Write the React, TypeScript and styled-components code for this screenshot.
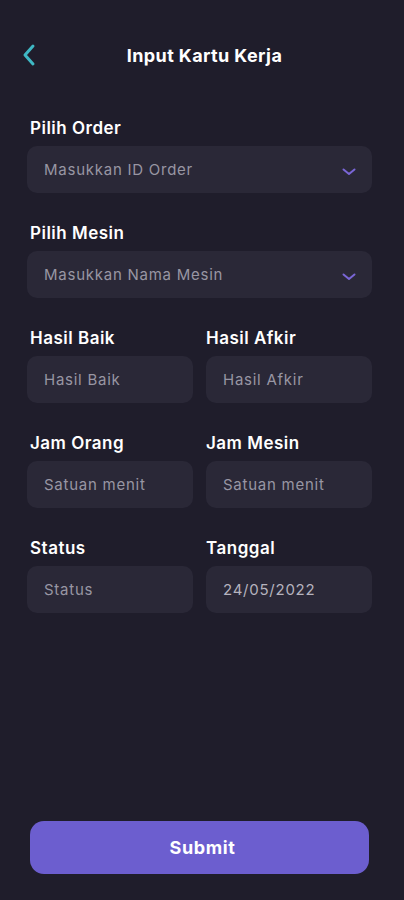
import styled, { createGlobalStyle } from 'styled-components';

const GlobalStyle = createGlobalStyle`
    * {
        box-sizing: border-box;
    }
    body {
        margin: 0;
        background-color: #1f1d2b;
        font-family: Inter, 'Noto Sans', sans-serif;
    }
`;

const ChevronLeft = () => (
    <svg width="16" height="24" viewBox="0 0 16 24" fill="none">
        <path d="M12 3L4 12L12 21" stroke="#3fb8c4" strokeWidth="3" strokeLinecap="round" strokeLinejoin="round" />
    </svg>
);

const ChevronDown = () => (
    <svg width="14" height="8" viewBox="0 0 14 8" fill="none">
        <path d="M1.5 1.5L7 6L12.5 1.5" stroke="#7a66d6" strokeWidth="2" strokeLinecap="round" strokeLinejoin="round" />
    </svg>
);

type FieldProps = {
    label: string;
    placeholder: string;
    select?: boolean;
    filled?: boolean;
    flush?: boolean;
};

const Field: React.FC<FieldProps> = ({ label, placeholder, select, filled, flush }) => (
    <StyledField>
        <StyledLabel flush={flush}>{label}</StyledLabel>
        <StyledInputBox>
            <StyledInputText filled={filled}>{placeholder}</StyledInputText>
            {select && (
                <StyledIconSlot>
                    <ChevronDown />
                </StyledIconSlot>
            )}
        </StyledInputBox>
    </StyledField>
);

const App = () => {
    return (
        <StyledScreen>
            <GlobalStyle />
            <StyledHeader>
                <StyledBackButton>
                    <ChevronLeft />
                </StyledBackButton>
                <StyledTitle>Input Kartu Kerja</StyledTitle>
            </StyledHeader>
            <StyledForm>
                <Field label="Pilih Order" placeholder="Masukkan ID Order" select />
                <Field label="Pilih Mesin" placeholder="Masukkan Nama Mesin" select />
                <StyledRow>
                    <Field label="Hasil Baik" placeholder="Hasil Baik" />
                    <Field label="Hasil Afkir" placeholder="Hasil Afkir" flush />
                </StyledRow>
                <StyledRow>
                    <Field label="Jam Orang" placeholder="Satuan menit" />
                    <Field label="Jam Mesin" placeholder="Satuan menit" flush />
                </StyledRow>
                <StyledRow>
                    <Field label="Status" placeholder="Status" />
                    <Field label="Tanggal" placeholder="24/05/2022" filled flush />
                </StyledRow>
            </StyledForm>
            <StyledSubmit>Submit</StyledSubmit>
        </StyledScreen>
    );
};

const StyledScreen = styled.div`
    display: flex;
    flex-direction: column;
    min-height: 900px;
    padding: 0 32px 26px 27px;
    background-color: #1f1d2b;
`;

const StyledHeader = styled.div`
    position: relative;
    display: flex;
    align-items: center;
    justify-content: center;
    height: 50px;
    margin-top: 30px;
`;

const StyledBackButton = styled.div`
    position: absolute;
    left: -6px;
    top: 13px;
    display: flex;
`;

const StyledTitle = styled.h1`
    margin: 0;
    padding-left: 10px;
    font-size: 18px;
    font-weight: 700;
    color: #ffffff;
    letter-spacing: 0.4px;
`;

const StyledForm = styled.div`
    display: flex;
    flex-direction: column;
    gap: 30px;
    margin-top: 38px;
`;

const StyledRow = styled.div`
    display: grid;
    grid-template-columns: 1fr 1fr;
    column-gap: 13px;
`;

const StyledField = styled.div`
    display: flex;
    flex-direction: column;
    gap: 8px;
`;

const StyledLabel = styled.label<{ flush?: boolean }>`
    padding-left: ${({ flush }) => (flush ? '0' : '3px')};
    font-size: 17px;
    line-height: 20px;
    font-weight: 600;
    color: #ffffff;
    letter-spacing: 0.5px;
`;

const StyledInputBox = styled.div`
    display: flex;
    align-items: center;
    height: 47px;
    padding: 0 16px 0 17px;
    border-radius: 10px;
    background-color: #2a2837;
`;

const StyledInputText = styled.span<{ filled?: boolean }>`
    flex: 1;
    font-size: 15px;
    color: ${({ filled }) => (filled ? '#b5b3be' : '#9896a3')};
    letter-spacing: 0.75px;
`;

const StyledIconSlot = styled.div`
    display: flex;
    margin-top: 4px;
`;

const StyledSubmit = styled.button`
    margin-top: auto;
    height: 53px;
    margin-left: 3px;
    margin-right: 3px;
    padding-left: 12px;
    border: none;
    border-radius: 14px;
    background-color: #6c5ecf;
    color: #ffffff;
    font-family: Inter, 'Noto Sans', sans-serif;
    font-size: 18px;
    font-weight: 700;
    letter-spacing: 0.6px;
`;

export default App;
